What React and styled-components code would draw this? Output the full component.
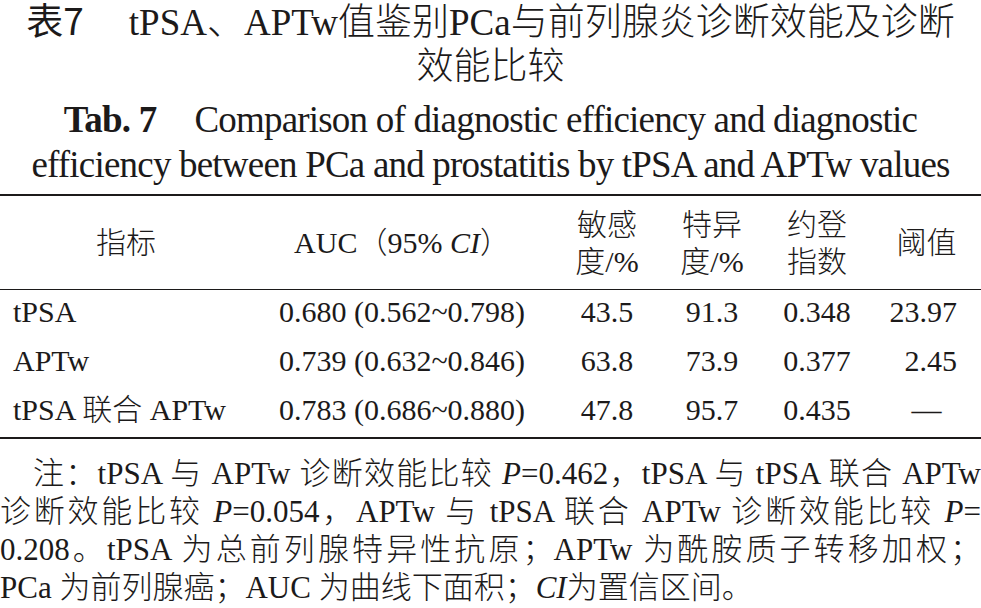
import React from 'react';
import styled, { createGlobalStyle } from 'styled-components';

const Global = createGlobalStyle`
  html, body { margin: 0; padding: 0; background: #ffffff; }
  body {
    font-family: "Liberation Serif", "Noto Sans CJK SC", serif;
    color: #1c1a1a;
    font-weight: 300;
  }
`;

const Page = styled.div`
  width: 981px;
  height: 608px;
  overflow: hidden;
`;

const CnTitle = styled.h1`
  margin: -3px 0 0;
  font-size: 37px;
  line-height: 44px;
  font-weight: 300;
  text-align: center;
  white-space: nowrap;
`;

const TitleLabel = styled.span`
  font-family: "Noto Sans CJK SC", sans-serif;
  font-weight: 400;
  margin-right: ${(p) => p.$gap}px;
`;

const EnTitle = styled.h2`
  margin: 8px 0 0;
  font-size: 37px;
  line-height: 45px;
  font-weight: 400;
  letter-spacing: -0.8px;
  text-align: center;
  white-space: nowrap;
`;

const EnLabel = styled.b`
  font-weight: 700;
  margin-right: ${(p) => p.$gap}px;
`;

const Table = styled.div`
  margin-top: 7px;
  border-top: 2px solid #1c1a1a;
  border-bottom: 2px solid #1c1a1a;
  font-size: 30px;
`;

const Row = styled.div`
  display: grid;
  grid-template-columns: 252px 300px 110px 100px 110px 109px;
  box-sizing: border-box;
  ${(p) =>
    p.$head
      ? `
    height: 94px;
    align-items: center;
    line-height: 37px;
    border-bottom: 1px solid #1c1a1a;
  `
      : `
    height: 49px;
    align-items: start;
    padding-top: 2px;
    line-height: 40px;
  `}
`;

const Cell = styled.div`
  text-align: ${(p) => p.$align || 'center'};
  padding-left: ${(p) => p.$pl || 0}px;
  padding-right: ${(p) => p.$pr || 0}px;
  white-space: nowrap;
`;

const I = styled.i`
  font-style: italic;
`;

const Notes = styled.div`
  margin-top: 16px;
  font-size: 31px;
  line-height: 38px;
`;

const NoteLine = styled.div`
  white-space: nowrap;
  padding-left: ${(p) => p.$indent || 0}px;
  text-align: left;
  text-align-last: ${(p) => (p.$justify ? 'justify' : 'left')};
  text-justify: inter-character;
`;

const header = [
  { key: 'idx', content: '指标' },
  { key: 'auc', content: <>AUC（95% <I>CI</I>）</> },
  { key: 'sen', content: <>敏感<br />度/%</> },
  { key: 'spe', content: <>特异<br />度/%</> },
  { key: 'you', content: <>约登<br />指数</> },
  { key: 'thr', content: '阈值' },
];

const rows = [
  ['tPSA', '0.680 (0.562~0.798)', '43.5', '91.3', '0.348', '23.97'],
  ['APTw', '0.739 (0.632~0.846)', '63.8', '73.9', '0.377', '2.45'],
  ['tPSA 联合 APTw', '0.783 (0.686~0.880)', '47.8', '95.7', '0.435', '—'],
];

export default function App() {
  return (
    <Page>
      <Global />
      <CnTitle>
        <TitleLabel $gap={45}>表7</TitleLabel>
        tPSA、APTw值鉴别PCa与前列腺炎诊断效能及诊断
        <br />
        效能比较
      </CnTitle>
      <EnTitle>
        <EnLabel $gap={38}>Tab. 7</EnLabel>
        Comparison of diagnostic efficiency and diagnostic
        <br />
        efficiency between PCa and prostatitis by tPSA and APTw values
      </EnTitle>
      <Table>
        <Row $head>
          {header.map((h) => (
            <Cell key={h.key}>{h.content}</Cell>
          ))}
        </Row>
        {rows.map((r) => (
          <Row key={r[0]}>
            <Cell $align="left" $pl={13}>{r[0]}</Cell>
            <Cell>{r[1]}</Cell>
            <Cell>{r[2]}</Cell>
            <Cell>{r[3]}</Cell>
            <Cell>{r[4]}</Cell>
            {r[5] === '—' ? (
              <Cell>{r[5]}</Cell>
            ) : (
              <Cell $align="right" $pr={24}>{r[5]}</Cell>
            )}
          </Row>
        ))}
      </Table>
      <Notes>
        <NoteLine $justify $indent={33}>
          注：tPSA 与 APTw 诊断效能比较 <I>P</I>=0.462，tPSA 与 tPSA 联合 APTw
        </NoteLine>
        <NoteLine $justify>
          诊断效能比较 <I>P</I>=0.054，APTw 与 tPSA 联合 APTw 诊断效能比较 <I>P</I>=
        </NoteLine>
        <NoteLine $justify>
          0.208。tPSA 为总前列腺特异性抗原；APTw 为酰胺质子转移加权；
        </NoteLine>
        <NoteLine>
          PCa 为前列腺癌；AUC 为曲线下面积；<I>CI</I>为置信区间。
        </NoteLine>
      </Notes>
    </Page>
  );
}
